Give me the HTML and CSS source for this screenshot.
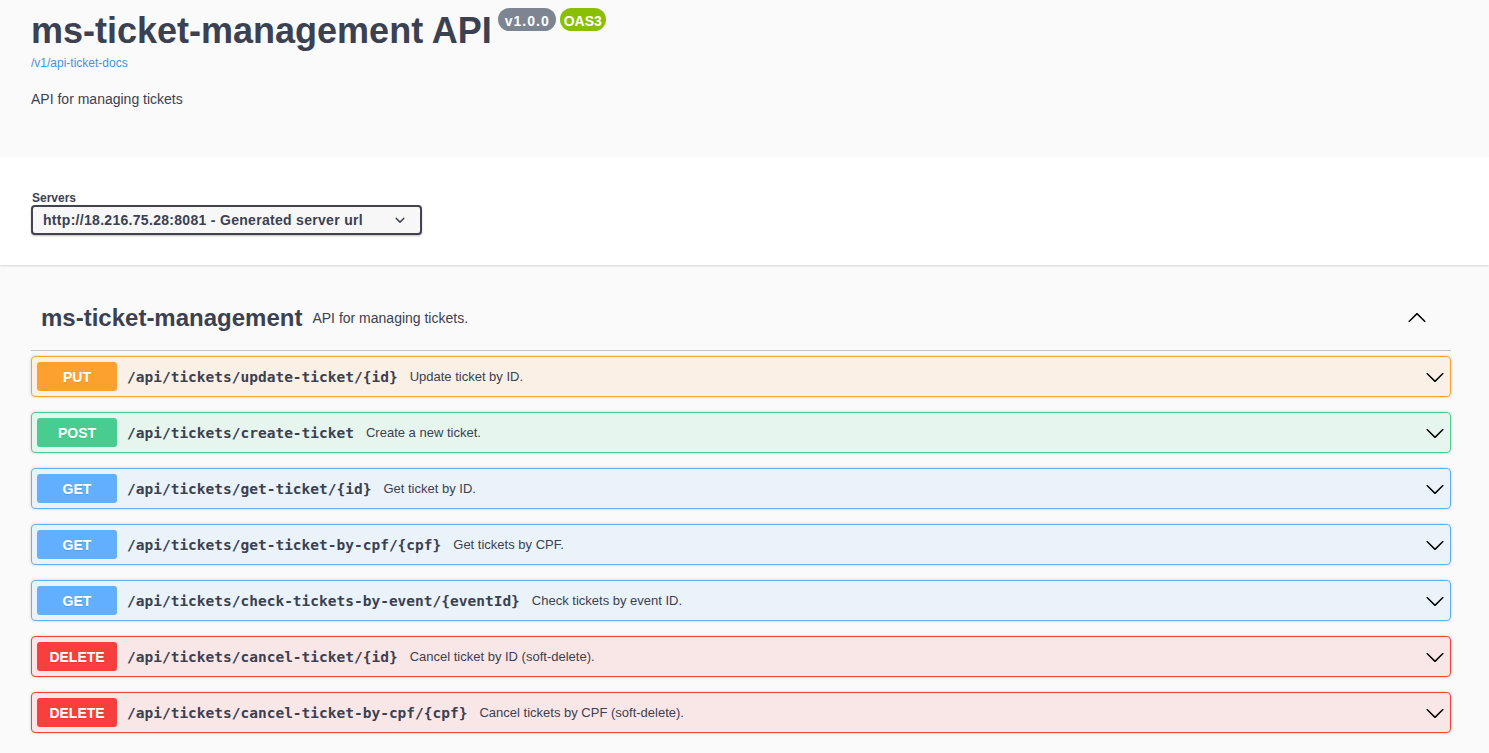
FILE: index.html
```html
<!DOCTYPE html>
<html lang="en">
<head>
<meta charset="utf-8">
<title>ms-ticket-management API</title>
<link rel="stylesheet" href="styles.css">
</head>
<body>
<div class="info">
  <div class="wrap">
    <h2 class="title"><span>ms-ticket-management API</span><span class="badge ver">v1.0.0</span><span class="badge oas">OAS3</span></h2>
    <a class="link" href="#">/v1/api-ticket-docs</a>
    <p class="desc">API for managing tickets</p>
  </div>
</div>
<div class="scheme">
  <div class="wrap">
    <label class="servers-label">Servers</label>
    <div class="select">
      <span>http://18.216.75.28:8081 - Generated server url</span>
      <svg width="20" height="20" viewBox="0 0 20 20"><path fill="#3b4151" d="M13.418 7.859a.695.695 0 0 1 .978 0 .68.68 0 0 1 0 .969l-3.908 3.83a.697.697 0 0 1-.979 0l-3.908-3.83a.68.68 0 0 1 0-.969.695.695 0 0 1 .978 0L10 11z"/></svg>
    </div>
  </div>
</div>
<div class="wrap ops">
  <div class="tag">
    <h3>ms-ticket-management</h3>
    <small>API for managing tickets.</small>
    <svg class="tag-arrow" width="20" height="20" viewBox="0 0 20 20"><path transform="rotate(180 10 10)" d="M17.418 6.109c.272-.268.709-.268.979 0s.271.701 0 .969l-7.908 7.83c-.27.268-.707.268-.979 0l-7.908-7.83c-.27-.268-.27-.701 0-.969.271-.268.709-.268.979 0L10 13.25l7.418-7.141z"/></svg>
  </div>

  <div class="opblock put">
    <span class="method">PUT</span>
    <span class="path">/api/tickets/update-ticket/{id}</span>
    <span class="summary">Update ticket by ID.</span>
    <svg class="arrow" width="20" height="20" viewBox="0 0 20 20"><path d="M17.418 6.109c.272-.268.709-.268.979 0s.271.701 0 .969l-7.908 7.83c-.27.268-.707.268-.979 0l-7.908-7.83c-.27-.268-.27-.701 0-.969.271-.268.709-.268.979 0L10 13.25l7.418-7.141z"/></svg>
  </div>
  <div class="opblock post">
    <span class="method">POST</span>
    <span class="path">/api/tickets/create-ticket</span>
    <span class="summary">Create a new ticket.</span>
    <svg class="arrow" width="20" height="20" viewBox="0 0 20 20"><path d="M17.418 6.109c.272-.268.709-.268.979 0s.271.701 0 .969l-7.908 7.83c-.27.268-.707.268-.979 0l-7.908-7.83c-.27-.268-.27-.701 0-.969.271-.268.709-.268.979 0L10 13.25l7.418-7.141z"/></svg>
  </div>
  <div class="opblock get">
    <span class="method">GET</span>
    <span class="path">/api/tickets/get-ticket/{id}</span>
    <span class="summary">Get ticket by ID.</span>
    <svg class="arrow" width="20" height="20" viewBox="0 0 20 20"><path d="M17.418 6.109c.272-.268.709-.268.979 0s.271.701 0 .969l-7.908 7.83c-.27.268-.707.268-.979 0l-7.908-7.83c-.27-.268-.27-.701 0-.969.271-.268.709-.268.979 0L10 13.25l7.418-7.141z"/></svg>
  </div>
  <div class="opblock get">
    <span class="method">GET</span>
    <span class="path">/api/tickets/get-ticket-by-cpf/{cpf}</span>
    <span class="summary">Get tickets by CPF.</span>
    <svg class="arrow" width="20" height="20" viewBox="0 0 20 20"><path d="M17.418 6.109c.272-.268.709-.268.979 0s.271.701 0 .969l-7.908 7.83c-.27.268-.707.268-.979 0l-7.908-7.83c-.27-.268-.27-.701 0-.969.271-.268.709-.268.979 0L10 13.25l7.418-7.141z"/></svg>
  </div>
  <div class="opblock get">
    <span class="method">GET</span>
    <span class="path">/api/tickets/check-tickets-by-event/{eventId}</span>
    <span class="summary">Check tickets by event ID.</span>
    <svg class="arrow" width="20" height="20" viewBox="0 0 20 20"><path d="M17.418 6.109c.272-.268.709-.268.979 0s.271.701 0 .969l-7.908 7.83c-.27.268-.707.268-.979 0l-7.908-7.83c-.27-.268-.27-.701 0-.969.271-.268.709-.268.979 0L10 13.25l7.418-7.141z"/></svg>
  </div>
  <div class="opblock delete">
    <span class="method">DELETE</span>
    <span class="path">/api/tickets/cancel-ticket/{id}</span>
    <span class="summary">Cancel ticket by ID (soft-delete).</span>
    <svg class="arrow" width="20" height="20" viewBox="0 0 20 20"><path d="M17.418 6.109c.272-.268.709-.268.979 0s.271.701 0 .969l-7.908 7.83c-.27.268-.707.268-.979 0l-7.908-7.83c-.27-.268-.27-.701 0-.969.271-.268.709-.268.979 0L10 13.25l7.418-7.141z"/></svg>
  </div>
  <div class="opblock delete">
    <span class="method">DELETE</span>
    <span class="path">/api/tickets/cancel-ticket-by-cpf/{cpf}</span>
    <span class="summary">Cancel tickets by CPF (soft-delete).</span>
    <svg class="arrow" width="20" height="20" viewBox="0 0 20 20"><path d="M17.418 6.109c.272-.268.709-.268.979 0s.271.701 0 .969l-7.908 7.83c-.27.268-.707.268-.979 0l-7.908-7.83c-.27-.268-.27-.701 0-.969.271-.268.709-.268.979 0L10 13.25l7.418-7.141z"/></svg>
  </div>
</div>
</body>
</html>
```
FILE: styles.css
```css
html, body {
  margin: 0;
  padding: 0;
  background: #fafafa;
  color: #3b4151;
  font-family: "Liberation Sans", Arial, sans-serif;
}

.wrap {
  padding: 0 38px 0 31px;
}

/* info */
.info {
  padding: 10px 0 50px;
}

.title {
  display: flex;
  align-items: flex-start;
  margin: 0;
  font-size: 36px;
  line-height: 41px;
  font-weight: 700;
  color: #3b4151;
}

.badge {
  display: inline-block;
  margin-top: -2px;
  padding: 5px 5px 1px;
  border-radius: 57px;
  font-size: 14px;
  line-height: 17px;
  font-weight: 700;
  color: #fff;
}

.badge.ver {
  margin-left: 6px;
  padding-left: 7px;
  padding-right: 6px;
  letter-spacing: 1px;
  background: #7d8492;
}

.badge.oas {
  margin-left: 4px;
  padding-left: 4px;
  padding-right: 4px;
  background: #89bf04;
}

.link {
  display: block;
  margin-top: 5px;
  font-size: 12px;
  line-height: 14px;
  color: #4990e2;
  text-decoration: none;
}

.desc {
  margin: 21px 0 0;
  font-size: 14px;
  line-height: 16px;
}

/* servers */
.scheme {
  background: #fff;
  padding: 34px 0 30px;
  margin-bottom: 20px;
  box-shadow: 0 1px 2px 0 rgba(0, 0, 0, .15);
}

.servers-label {
  display: block;
  padding-left: 1px;
  font-size: 12px;
  line-height: 14px;
  font-weight: 700;
}

.select {
  display: flex;
  align-items: center;
  justify-content: space-between;
  box-sizing: border-box;
  width: 391px;
  height: 30px;
  padding: 0 10px;
  background: #f7f7f7;
  border: 2px solid #41444e;
  border-radius: 4px;
  box-shadow: 0 1px 2px 0 rgba(0, 0, 0, .25);
  font-size: 14px;
  line-height: 16px;
  font-weight: 700;
  letter-spacing: 0.3px;
}

/* tag */
.tag {
  display: flex;
  align-items: center;
  min-height: 45px;
  padding: 10px 20px 10px 10px;
  margin-bottom: 5px;
  border-bottom: 1px solid rgba(59, 65, 81, .3);
}

.tag h3 {
  margin: 0;
  font-size: 24px;
  line-height: 28px;
  font-weight: 700;
}

.tag small {
  flex: 1;
  padding: 0 10px;
  font-size: 14px;
  line-height: 16px;
}

.tag-arrow {
  margin-right: 4px;
}

/* operations */
.opblock {
  display: flex;
  align-items: center;
  padding: 5px;
  margin-bottom: 15px;
  border: 1px solid #000;
  border-radius: 4px;
  box-shadow: 0 0 3px rgba(0, 0, 0, .19);
}

.method {
  min-width: 80px;
  padding: 7px 0 5px;
  border-radius: 3px;
  font-size: 14px;
  line-height: 17px;
  font-weight: 700;
  text-align: center;
  color: #fff;
  text-shadow: 0 1px 0 rgba(0, 0, 0, .1);
}

.path {
  padding: 0 10px;
  font-family: "DejaVu Sans Mono", "Liberation Mono", monospace;
  font-size: 14.5px;
  font-weight: 700;
  color: #3b4151;
}

.summary {
  flex: 1;
  padding-left: 2px;
  font-size: 13px;
  color: #3b4151;
}

.arrow {
  flex: none;
}

.put { background: rgba(252, 161, 48, .1); border-color: #fca130; }
.put .method { background: #fca130; }

.post { background: rgba(73, 204, 144, .1); border-color: #49cc90; }
.post .method { background: #49cc90; }

.get { background: rgba(97, 175, 254, .1); border-color: #61affe; }
.get .method { background: #61affe; }

.delete { background: rgba(249, 62, 62, .1); border-color: #f93e3e; }
.delete .method { background: #f93e3e; }
```
